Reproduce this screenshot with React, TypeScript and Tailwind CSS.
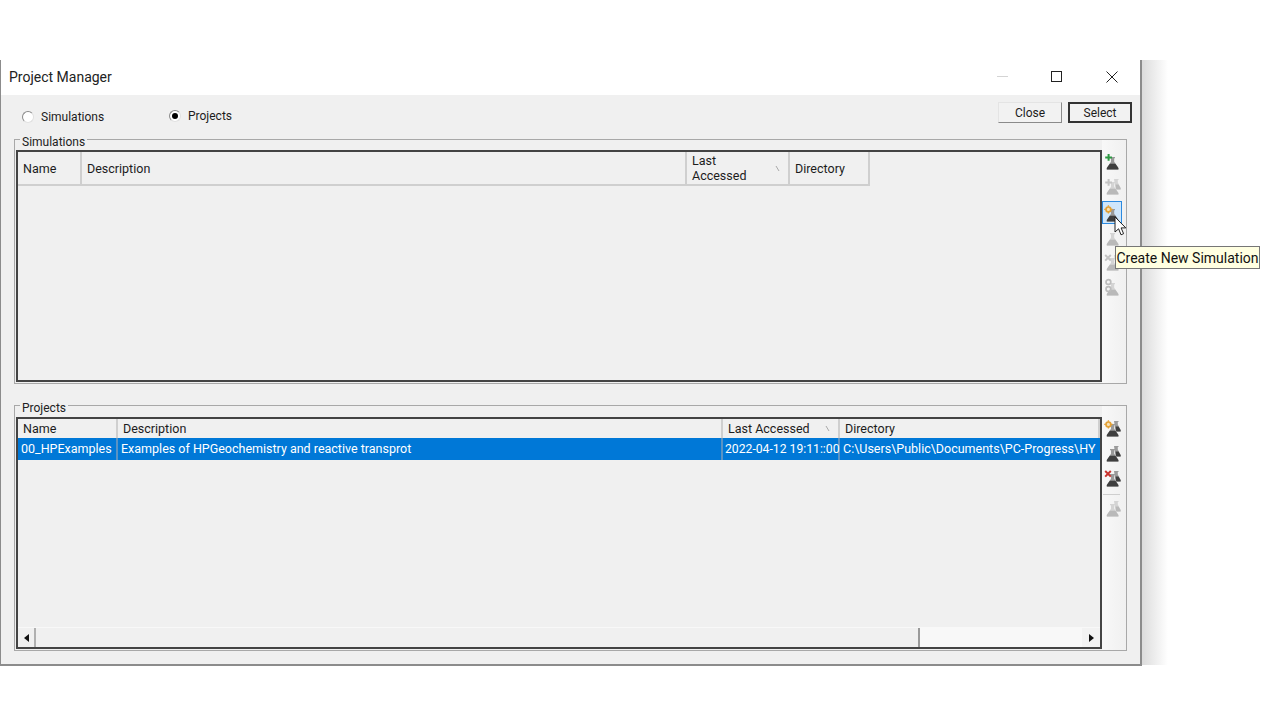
import React from "react";

type FlaskTone = "dark" | "faded";
type Badge = "plus" | "gear" | "cross" | "none" | "people";

const FlaskIcon: React.FC<{ tone?: FlaskTone; badge?: Badge; double?: boolean }> = ({
  tone = "dark",
  badge = "none",
  double = false,
}) => {
  const main = tone === "dark" ? "#3f3f3f" : "#b9b9b9";
  const light = tone === "dark" ? "#9a9a9a" : "#d4d4d4";
  return (
    <svg width="18" height="20" viewBox="0 0 18 20" className="block">
      {double && (
        <g>
          <path d="M11 3h4.5v1h-.7v2.6L17.6 12v1.4h-5z" fill={light} />
          <path d="M12.6 8.6h2.9l2.1 3.4v1.4h-4.4z" fill={main} />
        </g>
      )}
      <path d="M7 6h5v1.2h-.8v3.6L15.4 17v1.4H3.8V17L8 10.8V7.2H7z" fill={light} />
      <path d="M6.8 12.8h5.6l3 4.2v1.4H3.8V17z" fill={main} />
      {badge === "plus" && (
        <path d="M4.6 3h2v2.4H9v2H6.6v2.4h-2V7.4H2.2v-2h2.4z" fill={tone === "dark" ? "#2e9a44" : "#c4c4c4"} />
      )}
      {badge === "gear" && (
        <g>
          <circle cx="5.4" cy="6.4" r="2.4" fill="#f6e2b8" stroke={tone === "dark" ? "#e3a136" : "#ccc"} strokeWidth="1.7" />
          <path d="M5.4 2.2v1.6M5.4 9v1.6M1.2 6.4h1.6M8 6.4h1.6" stroke={tone === "dark" ? "#e3a136" : "#ccc"} strokeWidth="1.3" />
        </g>
      )}
      {badge === "cross" && (
        <path d="M2.2 3l5.6 5.6M7.8 3L2.2 8.6" stroke={tone === "dark" ? "#c8322d" : "#c4c4c4"} strokeWidth="2" />
      )}
      {badge === "people" && (
        <g fill="none" stroke="#bdbdbd" strokeWidth="1.7">
          <circle cx="5.4" cy="5" r="2.4" />
          <circle cx="5.4" cy="12" r="2.4" />
        </g>
      )}
    </svg>
  );
};

const SortMark = () => (
  <svg width="5" height="7" viewBox="0 0 5 7" className="shrink-0">
    <path d="M1 1l3 5" stroke="#a9a9a9" strokeWidth="1" />
  </svg>
);

const HeaderCell: React.FC<{ width: string; children: React.ReactNode; sort?: boolean }> = ({
  width,
  children,
  sort,
}) => (
  <div className={`${width} h-full shrink-0 flex items-center justify-between pl-[5px] pr-[8px] border-r-2 border-[#cfcfcf] leading-[15px]`}>
    <span>{children}</span>
    {sort && <SortMark />}
  </div>
);

const GroupBox: React.FC<{ title: string; className: string; children: React.ReactNode }> = ({
  title,
  className,
  children,
}) => (
  <div className={`relative mx-[13px] border border-[#a8a8a8] ${className}`}>
    <span className="absolute left-[5px] top-[-5px] bg-[#f0f0f0] px-[2px] text-[12px] leading-[14px] text-[#222]">{title}</span>
    {children}
  </div>
);

const App: React.FC = () => {
  return (
    <div className="w-[1280px] h-[720px] overflow-hidden bg-white pt-[60px] flex items-start text-[12.5px] text-[#1c1c1c] font-['Roboto','Open_Sans',sans-serif]">
      <div className="relative w-[1142px] h-[606px] shrink-0 flex flex-col border-l border-r-2 border-b-2 border-[#8c8c8c] bg-[#f0f0f0]">
        {/* title bar */}
        <div className="h-[35px] shrink-0 bg-white flex items-center justify-between pl-[8px] pr-px">
          <span className="text-[14px] text-[#222]">Project Manager</span>
          <div className="flex items-center mb-[2px]">
            <div className="w-[52px] flex justify-center">
              <div className="w-[11px] h-px bg-[#d4d4d4]" />
            </div>
            <div className="w-[56px] flex justify-center">
              <div className="w-[11px] h-[11px] border border-[#222]" />
            </div>
            <div className="w-[55px] flex justify-center">
              <svg width="12" height="12" viewBox="0 0 12 12">
                <path d="M.5.5l11 11M11.5.5l-11 11" stroke="#222" strokeWidth="1" />
              </svg>
            </div>
          </div>
        </div>

        {/* radios and buttons */}
        <div className="h-[44px] shrink-0 flex items-start justify-between pl-[21px] pr-[8px] pt-[7px] text-[12px]">
          <div className="flex items-start pt-[7px]">
            <label className="w-[147px] h-[14px] mt-px flex items-center gap-[7px]">
              <span className="w-[12px] h-[12px] rounded-full border border-[#8a8a8a] border-b-[#e0e0e0] border-r-[#e0e0e0] bg-white" />
              <span>Simulations</span>
            </label>
            <label className="h-[14px] flex items-center gap-[7px]">
              <span className="w-[12px] h-[12px] rounded-full border border-[#8a8a8a] border-b-[#e0e0e0] border-r-[#e0e0e0] bg-white flex items-center justify-center">
                <span className="w-[6px] h-[6px] rounded-full bg-black" />
              </span>
              <span>Projects</span>
            </label>
          </div>
          <div className="flex gap-[6px]">
            <button className="w-[64px] h-[21px] bg-[#f2f2f2] border border-[#e4e4e4] border-b-[#8a8a8a] border-r-[#8a8a8a] leading-none">Close</button>
            <button className="w-[64px] h-[21px] bg-[#f2f2f2] border-2 border-[#333] leading-none">Select</button>
          </div>
        </div>

        {/* simulations */}
        <GroupBox title="Simulations" className="h-[245px] flex">
          <div className="w-[1086px] h-[232px] mt-[10px] ml-px border-2 border-[#444]">
            <div className="h-[34px] flex w-fit border-b-2 border-[#cfcfcf]">
              <HeaderCell width="w-[64px]">Name</HeaderCell>
              <HeaderCell width="w-[605px]">Description</HeaderCell>
              <HeaderCell width="w-[103px]" sort>
                Last
                <br />
                Accessed
              </HeaderCell>
              <HeaderCell width="w-[80px]">Directory</HeaderCell>
            </div>
          </div>
          <div className="flex-1 flex flex-col items-start pl-px pt-[8px] bg-gradient-to-r from-[#f8f8f8] to-[#f0f0f0]">
            <div className="h-[25px] flex items-center"><FlaskIcon badge="plus" /></div>
            <div className="h-[25px] flex items-center"><FlaskIcon tone="faded" badge="plus" double /></div>
            <div className="h-[23px] mt-[3px] w-[20px] -ml-px flex items-center justify-center border border-[#2b8ae0] bg-[#cfe6fa]">
              <FlaskIcon badge="gear" />
            </div>
            <div className="h-[25px] flex items-center"><FlaskIcon tone="faded" /></div>
            <div className="h-[25px] flex items-center"><FlaskIcon tone="faded" badge="cross" double /></div>
            <div className="h-[25px] flex items-center"><FlaskIcon tone="faded" badge="people" /></div>
          </div>
        </GroupBox>

        <div className="h-[21px] shrink-0" />

        {/* projects */}
        <GroupBox title="Projects" className="h-[246px] flex">
          <div className="w-[1086px] h-[232px] mt-[11px] ml-px border-2 border-[#444] flex flex-col">
            <div className="h-[19px] shrink-0 flex w-full overflow-hidden">
              <HeaderCell width="w-[100px]">Name</HeaderCell>
              <HeaderCell width="w-[605px]">Description</HeaderCell>
              <HeaderCell width="w-[117px]" sort>Last Accessed</HeaderCell>
              <HeaderCell width="w-[260px]">Directory</HeaderCell>
            </div>
            <div className="h-[22px] shrink-0 flex bg-[#0078d7] text-white overflow-hidden whitespace-nowrap">
              <div className="w-[100px] shrink-0 pl-[3px] border-r-2 border-[#5a93c4] leading-[22px]">00_HPExamples</div>
              <div className="w-[605px] shrink-0 pl-[3px] border-r-2 border-[#5a93c4] leading-[22px]">Examples of HPGeochemistry and reactive transprot</div>
              <div className="w-[117px] shrink-0 pl-[2px] border-r-2 border-[#5a93c4] text-[12.2px] leading-[22px]">2022-04-12 19:11::00</div>
              <div className="flex-1 min-w-0 pl-[3px] leading-[22px]">C:\Users\Public\Documents\PC-Progress\HY</div>
            </div>
            <div className="flex-1" />
            {/* horizontal scrollbar */}
            <div className="h-[20px] shrink-0 flex border-t border-[#f8f8f8]">
              <div className="w-[18px] flex items-center justify-center border-r-2 border-[#b0b0b0]">
                <svg width="5" height="8" viewBox="0 0 5 8"><path d="M5 0v8L0 4z" fill="#111" /></svg>
              </div>
              <div className="w-[884px] border-r-2 border-[#9a9a9a]" />
              <div className="flex-1 bg-[#f8f8f8]" />
              <div className="w-[18px] flex items-center justify-center bg-[#f2f2f2]">
                <svg width="5" height="8" viewBox="0 0 5 8"><path d="M0 0v8l5-4z" fill="#111" /></svg>
              </div>
            </div>
          </div>
          <div className="flex-1 flex flex-col items-start pl-px pt-[9px] bg-gradient-to-r from-[#f8f8f8] to-[#f0f0f0]">
            <div className="h-[25px] flex items-center"><FlaskIcon badge="gear" double /></div>
            <div className="h-[25px] flex items-center"><FlaskIcon double /></div>
            <div className="h-[25px] flex items-center"><FlaskIcon badge="cross" double /></div>
            <div className="w-[17px] h-px bg-[#cfcfcf] mt-[4px]" />
            <div className="h-[26px] flex items-center"><FlaskIcon tone="faded" double /></div>
          </div>
        </GroupBox>

        {/* tooltip + pointer */}
        <div className="absolute left-[1114px] top-[186px] h-[23px] w-[145px] flex items-center justify-center pt-px bg-[#ffffe1] border border-[#767676] text-[14px] text-[#111] whitespace-nowrap z-10">
          Create New Simulation
        </div>
        <svg width="13" height="21" viewBox="0 0 13 21" className="absolute left-[1113px] top-[156px] z-20">
          <path d="M1 1v15l3.6-3.2 2.4 6 2.6-1.1-2.5-5.8h4.7z" fill="#fff" stroke="#222" strokeWidth="1" />
        </svg>
      </div>
      {/* drop shadow on the right of the window */}
      <div className="w-[26px] h-[605px] shrink-0 bg-gradient-to-r from-[#dcdcdc] to-white" />
    </div>
  );
};

export default App;
